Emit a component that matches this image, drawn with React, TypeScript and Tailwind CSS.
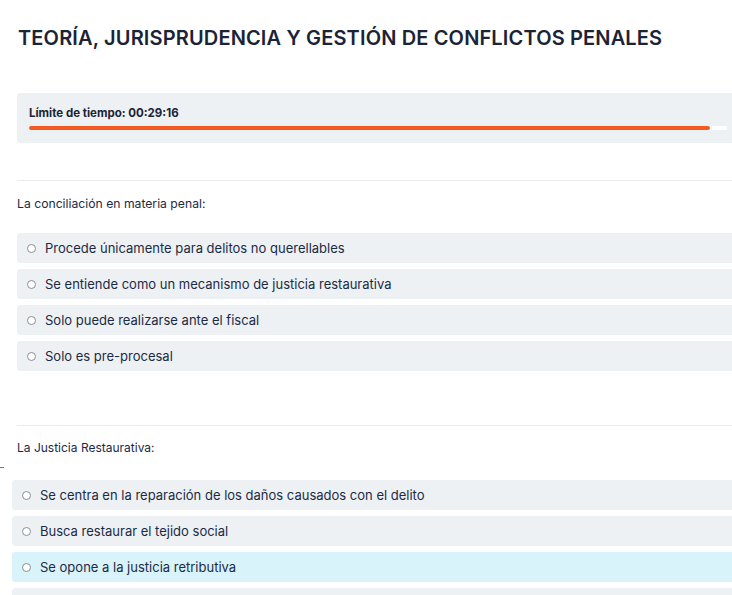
import React from 'react'

const font = { fontFamily: 'Inter, "Noto Sans", sans-serif' }

function Option({ text, active }: { text: string; active?: boolean }) {
  return (
    <div
      className={`flex items-center h-[30px] rounded-[3px] pl-[10px] ${
        active ? 'bg-[#d9f3fb]' : 'bg-[#eef1f4]'
      }`}
    >
      <span className="w-[9px] h-[9px] rounded-full border border-[#8a8f96] bg-white shrink-0" />
      <span className="ml-[9px] text-[13px] text-[#1b2a44] leading-none">{text}</span>
    </div>
  )
}

export default function App() {
  return (
    <div className="w-[732px] h-[595px] overflow-hidden bg-white" style={font}>
      <div className="w-[760px]">
        <h1 className="pl-[18px] pt-[24px] text-[20px] font-semibold leading-[28px] text-[#1b2336] tracking-[0.15px]">
          TEORÍA, JURISPRUDENCIA Y GESTIÓN DE CONFLICTOS PENALES
        </h1>

        <div className="ml-[17px] mt-[41px] h-[50px] bg-[#eef1f4] rounded-[3px] pl-[12px] pr-[40px] pt-[13px]">
          <div className="text-[11.5px] font-bold text-[#1b2336] leading-[14px]">
            Límite de tiempo: 00:29:16
          </div>
          <div className="mt-[6px] h-[4px] w-[698px] bg-white rounded-full">
            <div className="h-full w-[681px] bg-[#f25a22] rounded-full" />
          </div>
        </div>

        <div className="ml-[17px] mt-[37px] border-t border-[#e8ebee]" />

        <p className="ml-[17px] mt-[15px] text-[12.2px] text-[#1b2a44] leading-[16px]">
          La conciliación en materia penal:
        </p>

        <div className="ml-[17px] mt-[21px] flex flex-col gap-[6px]">
          <Option text="Procede únicamente para delitos no querellables" />
          <Option text="Se entiende como un mecanismo de justicia restaurativa" />
          <Option text="Solo puede realizarse ante el fiscal" />
          <Option text="Solo es pre-procesal" />
        </div>

        <div className="ml-[17px] mt-[54px] border-t border-[#e8ebee]" />

        <div className="relative">
          <span className="absolute left-0 top-[27px] w-[4px] h-px bg-[#777]" />
          <p className="ml-[17px] mt-[14px] text-[12px] text-[#1b2a44] leading-[16px]">
            La Justicia Restaurativa:
          </p>
        </div>

        <div className="ml-[12px] mt-[24px] flex flex-col gap-[6px]">
          <Option text="Se centra en la reparación de los daños causados con el delito" />
          <Option text="Busca restaurar el tejido social" />
          <Option text="Se opone a la justicia retributiva" active />
          <Option text="" />
        </div>
      </div>
    </div>
  )
}
